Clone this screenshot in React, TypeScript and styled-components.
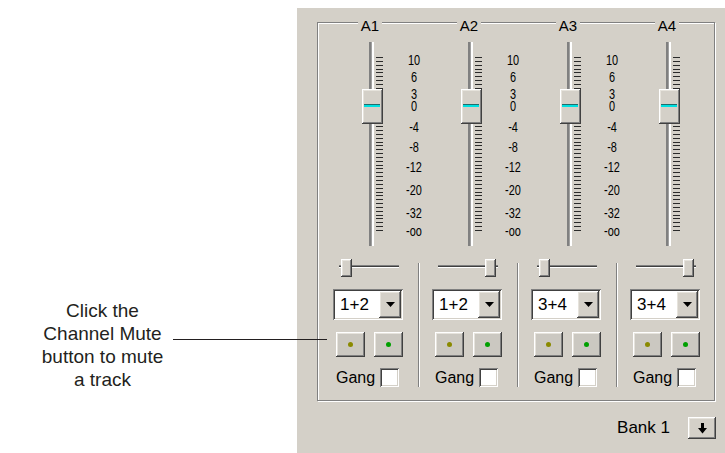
import React from "react";
import styled, { createGlobalStyle } from "styled-components";

const FACE = "#d4d0c8";

const GlobalStyle = createGlobalStyle`
  html, body {
    margin: 0;
    padding: 0;
    background: #ffffff;
  }
  body {
    font-family: "Liberation Sans", Arial, sans-serif;
    color: #000;
  }
`;

const raised = `
  box-shadow: inset -1px -1px #404040, inset 1px 1px #ffffff,
    inset -2px -2px #808080, inset 2px 2px #e6e3dc;
`;

const sunken = `
  box-shadow: inset 1px 1px #808080, inset -1px -1px #ffffff,
    inset 2px 2px #404040, inset -2px -2px ${FACE};
`;

interface Channel {
  name: string;
  pair: string;
  pan: "left" | "right";
  scale: boolean;
}

const channels: Channel[] = [
  { name: "A1", pair: "1+2", pan: "left", scale: true },
  { name: "A2", pair: "1+2", pan: "right", scale: true },
  { name: "A3", pair: "3+4", pan: "left", scale: true },
  { name: "A4", pair: "3+4", pan: "right", scale: false },
];

// label text + top offset inside the scale (px)
const scaleMarks: [string, number][] = [
  ["10", 13],
  ["6", 30],
  ["3", 47],
  ["0", 59],
  ["-4", 80],
  ["-8", 100],
  ["-12", 120],
  ["-20", 143],
  ["-32", 166],
  ["-oo", 184],
];

const ticks = Array.from({ length: 46 }, (_, i) => Math.round((i * 173) / 45) + 0.5);

const App = () => {
  return (
    <>
      <GlobalStyle />
      <Page>
        <Callout>
          <CalloutText>
            Click the
            <br />
            Channel Mute
            <br />
            button to mute
            <br />
            a track
          </CalloutText>
        </Callout>
        <Leader />
        <Panel>
          <GroupBox>
            <HeaderRow>
              {channels.map((ch) => (
                <HeaderCell key={ch.name}>
                  <HeaderLabel>{ch.name}</HeaderLabel>
                </HeaderCell>
              ))}
            </HeaderRow>

            <SliderRow>
              {channels.map((ch) => (
                <ChannelTop key={ch.name}>
                  <VSlider>
                    <VTrack />
                    <TickMarks width="7" height="174" viewBox="0 0 7 174">
                      {ticks.map((y) => (
                        <line key={y} x1="0" x2="7" y1={y} y2={y} stroke="#2a2a2a" strokeWidth="1" />
                      ))}
                    </TickMarks>
                    <VThumb>
                      <ThumbMark />
                    </VThumb>
                  </VSlider>
                  <Scale>
                    {ch.scale &&
                      scaleMarks.map(([label, top]) => (
                        <ScaleLabel key={label} $top={top}>
                          {label}
                        </ScaleLabel>
                      ))}
                  </Scale>
                </ChannelTop>
              ))}
            </SliderRow>

            <BottomRow>
              {channels.map((ch, i) => (
                <BottomCol key={ch.name} $divider={i > 0}>
                  <HSlider>
                    <HTrack />
                    <HThumb $pos={ch.pan} />
                  </HSlider>
                  <ComboBox>
                    <ComboText>{ch.pair}</ComboText>
                    <ComboButton>
                      <svg width="9" height="5" viewBox="0 0 9 5">
                        <polygon points="0,0 9,0 4.5,5" fill="#000" />
                      </svg>
                    </ComboButton>
                  </ComboBox>
                  <ButtonRow>
                    <MuteButton>
                      <Dot $color="#8a8a00" />
                    </MuteButton>
                    <MuteButton>
                      <Dot $color="#00a000" />
                    </MuteButton>
                  </ButtonRow>
                  <GangRow>
                    <GangLabel>Gang</GangLabel>
                    <CheckBox />
                  </GangRow>
                </BottomCol>
              ))}
            </BottomRow>
          </GroupBox>

          <Footer>
            <BankLabel>Bank 1</BankLabel>
            <BankButton>
              <svg width="9" height="11" viewBox="0 0 9 11">
                <rect x="3" y="0" width="3" height="6" fill="#000" />
                <polygon points="0,5 9,5 4.5,10.5" fill="#000" />
              </svg>
            </BankButton>
          </Footer>
        </Panel>
      </Page>
    </>
  );
};

const Page = styled.div`
  position: relative;
  display: flex;
  width: 725px;
  height: 453px;
  overflow: hidden;
  background: #ffffff;
`;

const Callout = styled.div`
  flex: none;
  width: 297px;
  box-sizing: border-box;
  padding-top: 299px;
`;

const CalloutText = styled.p`
  margin: 0;
  width: 205px;
  text-align: center;
  font-size: 19px;
  line-height: 23px;
  color: #231f20;
`;

const Leader = styled.div`
  position: absolute;
  left: 173px;
  top: 339px;
  width: 154px;
  height: 1px;
  background: #231f20;
  z-index: 2;
`;

const Panel = styled.div`
  flex: 1;
  margin-top: 8px;
  background: ${FACE};
  display: flex;
  flex-direction: column;
`;

const GroupBox = styled.div`
  margin: 14px 0 0 20px;
  width: 398px;
  height: 379px;
  box-sizing: border-box;
  border: 1px solid #808080;
  box-shadow: inset 1px 1px #ffffff, 1px 1px #ffffff;
`;

const HeaderRow = styled.div`
  display: grid;
  grid-template-columns: repeat(4, 99px);
  margin-top: -6px;
  height: 17px;
`;

const HeaderCell = styled.div`
  display: flex;
  justify-content: center;
  padding-left: 5px;
`;

const HeaderLabel = styled.span`
  background: ${FACE};
  padding: 0 3px;
  font-size: 15px;
  line-height: 17px;
`;

const SliderRow = styled.div`
  display: grid;
  grid-template-columns: repeat(4, 99px);
  margin-top: 8px;
  height: 204px;
`;

const ChannelTop = styled.div`
  display: flex;
  padding-left: 44px;
`;

const VSlider = styled.div`
  position: relative;
  flex: none;
  display: flex;
  align-items: flex-start;
  width: 21px;
  height: 204px;
`;

const VTrack = styled.div`
  margin-left: 7px;
  width: 5px;
  height: 100%;
  background: linear-gradient(to right, #808080 0 2px, #a0a0a0 2px 3px, #ffffff 3px 5px);
`;

const TickMarks = styled.svg`
  display: block;
  margin: 15px 0 0 2px;
`;

const VThumb = styled.div`
  position: absolute;
  left: 0;
  top: 47px;
  width: 21px;
  height: 35px;
  box-sizing: border-box;
  background: ${FACE};
  ${raised}
  display: flex;
  flex-direction: column;
`;

const ThumbMark = styled.div`
  margin: 15px 3px 0 2px;
  height: 3px;
  background: linear-gradient(#1f6e6e 0 1px, #00e0e0 1px 3px);
`;

const Scale = styled.div`
  position: relative;
  flex: none;
  width: 24px;
  height: 204px;
  margin-left: 19px;
`;

const ScaleLabel = styled.span<{ $top: number }>`
  position: absolute;
  left: 0;
  right: 0;
  top: ${({ $top }) => $top}px;
  text-align: center;
  font-size: 14px;
  line-height: 10px;
  transform: scaleX(0.78);
`;

const BottomRow = styled.div`
  display: grid;
  grid-template-columns: repeat(4, 99px);
  margin-top: 13px;
`;

const BottomCol = styled.div<{ $divider: boolean }>`
  position: relative;
  display: flex;
  flex-direction: column;
  align-items: flex-start;
  padding-left: 15px;

  &::before {
    content: "";
    display: ${({ $divider }) => ($divider ? "block" : "none")};
    position: absolute;
    left: 1px;
    top: 4px;
    width: 1px;
    height: 124px;
    background: #808080;
    box-shadow: 1px 0 #ffffff;
  }
`;

const HSlider = styled.div`
  position: relative;
  width: 60px;
  height: 18px;
  margin-left: 6px;
`;

const HTrack = styled.div`
  margin-top: 6px;
  height: 3px;
  background: linear-gradient(#808080 0 1px, #404040 1px 2px, #ffffff 2px 3px);
`;

const HThumb = styled.div<{ $pos: "left" | "right" }>`
  position: absolute;
  top: 0;
  ${({ $pos }) => ($pos === "left" ? "left: 2px;" : "right: 2px;")}
  width: 11px;
  height: 18px;
  background: ${FACE};
  ${raised}
`;

const ComboBox = styled.div`
  margin-top: 12px;
  width: 70px;
  height: 31px;
  box-sizing: border-box;
  padding: 2px;
  display: flex;
  background: #ffffff;
  ${sunken}
`;

const ComboText = styled.span`
  flex: 1;
  padding-left: 5px;
  font-size: 17px;
  line-height: 27px;
`;

const ComboButton = styled.div`
  width: 22px;
  display: flex;
  align-items: center;
  justify-content: center;
  background: ${FACE};
  ${raised}
`;

const ButtonRow = styled.div`
  display: flex;
  gap: 9px;
  margin: 12px 0 0 3px;
`;

const MuteButton = styled.div`
  width: 29px;
  height: 25px;
  display: flex;
  align-items: center;
  justify-content: center;
  background: #cbc8c1;
  ${raised}
`;

const Dot = styled.span<{ $color: string }>`
  width: 5px;
  height: 5px;
  border-radius: 50%;
  background: ${({ $color }) => $color};
`;

const GangRow = styled.div`
  display: flex;
  align-items: center;
  gap: 5px;
  margin: 11px 0 0 3px;
`;

const GangLabel = styled.span`
  font-size: 16px;
  line-height: 19px;
`;

const CheckBox = styled.div`
  width: 19px;
  height: 19px;
  background: #ffffff;
  ${sunken}
`;

const Footer = styled.div`
  display: flex;
  justify-content: flex-end;
  align-items: center;
  gap: 18px;
  margin-top: 16px;
  padding-right: 9px;
`;

const BankLabel = styled.span`
  font-size: 17px;
  line-height: 20px;
`;

const BankButton = styled.div`
  width: 28px;
  height: 22px;
  display: flex;
  align-items: center;
  justify-content: center;
  background: ${FACE};
  ${raised}
`;

export default App;
